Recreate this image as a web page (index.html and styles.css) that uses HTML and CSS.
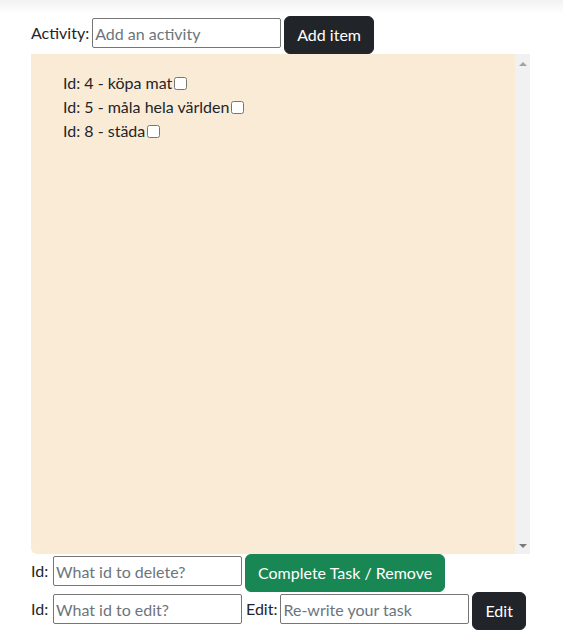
FILE: index.html
```html
<!DOCTYPE html>
<html lang="sv">
<head>
<meta charset="utf-8">
<title>Todo</title>
<link rel="stylesheet" href="styles.css">
</head>
<body>
<div class="topshade"></div>
<main class="app">
  <div class="row row-add">
    <label class="lbl" for="act">Activity:</label>
    <input id="act" class="field" type="text" placeholder="Add an activity">
    <button class="btn btn-dark">Add item</button>
  </div>
  <div class="listbox">
    <div class="listarea">
      <ul class="todo">
        <li>Id: 4 - köpa mat<input type="checkbox" class="chk"></li>
        <li>Id: 5 - måla hela världen<input type="checkbox" class="chk"></li>
        <li>Id: 8 - städa<input type="checkbox" class="chk"></li>
      </ul>
    </div>
    <div class="scrollbar" aria-hidden="true">
      <span class="arrow arrow-up"></span>
      <span class="arrow arrow-down"></span>
    </div>
  </div>
  <div class="row">
    <label class="lbl lbl-id" for="del">Id:</label>
    <input id="del" class="field" type="text" placeholder="What id to delete?">
    <button class="btn btn-green">Complete Task / Remove</button>
  </div>
  <div class="row">
    <label class="lbl lbl-id" for="eid">Id:</label>
    <input id="eid" class="field" type="text" placeholder="What id to edit?">
    <label class="lbl lbl-edit" for="etx">Edit:</label>
    <input id="etx" class="field" type="text" placeholder="Re-write your task">
    <button class="btn btn-dark">Edit</button>
  </div>
</main>
</body>
</html>
```
FILE: styles.css
```css
* { box-sizing: border-box; }
html, body { margin: 0; padding: 0; background: #fff; }
body {
  font-family: "Segoe UI", Lato, "Open Sans", sans-serif;
  font-size: 16px;
  line-height: 1.5;
  color: #212529;
}
.topshade {
  height: 14px;
  background: linear-gradient(#f2f2f2, #ffffff);
}
.app {
  padding: 2px 0 0 31px;
  width: 531px;
}
.row {
  display: flex;
  align-items: flex-start;
  gap: 3px;
}
.lbl {
  margin-top: 5px;
  line-height: 24px;
}
.lbl-id { min-width: 19px; }
.lbl-edit { margin-left: 1px; }
.field {
  margin-top: 2px;
  width: 189px;
  height: 30px;
  padding: 1px 2px;
  border: 1px solid #767676;
  border-radius: 2px;
  font: inherit;
  color: #212529;
  background: #fff;
}
.field::placeholder { color: #6c757d; }
.btn {
  font: inherit;
  line-height: 24px;
  padding: 6px 12px;
  border: 1px solid transparent;
  border-radius: 6px;
  color: #fff;
  cursor: pointer;
}
.btn-dark { background: #212529; border-color: #212529; }
.btn-green { background: #198754; border-color: #198754; }
.listbox {
  display: flex;
  width: 499px;
  height: 500px;
  background: antiquewhite;
  border-radius: 0 0 0 6px;
  overflow: hidden;
}
.listarea { flex: 1; }
.todo {
  list-style: none;
  margin: 0;
  padding: 17px 0 0 32px;
}
.todo li { line-height: 24px; }
.chk {
  width: 13px;
  height: 13px;
  margin: 0 0 0 2px;
  vertical-align: -1px;
}
.scrollbar {
  width: 15px;
  background: #f1f1f1;
  display: flex;
  flex-direction: column;
  justify-content: space-between;
  align-items: center;
  padding: 8px 0 6px;
}
.arrow {
  width: 0;
  height: 0;
  border-left: 4px solid transparent;
  border-right: 4px solid transparent;
}
.arrow-up { border-bottom: 4px solid #a3a3a3; }
.arrow-down { border-top: 4px solid #7a7a7a; }
```
